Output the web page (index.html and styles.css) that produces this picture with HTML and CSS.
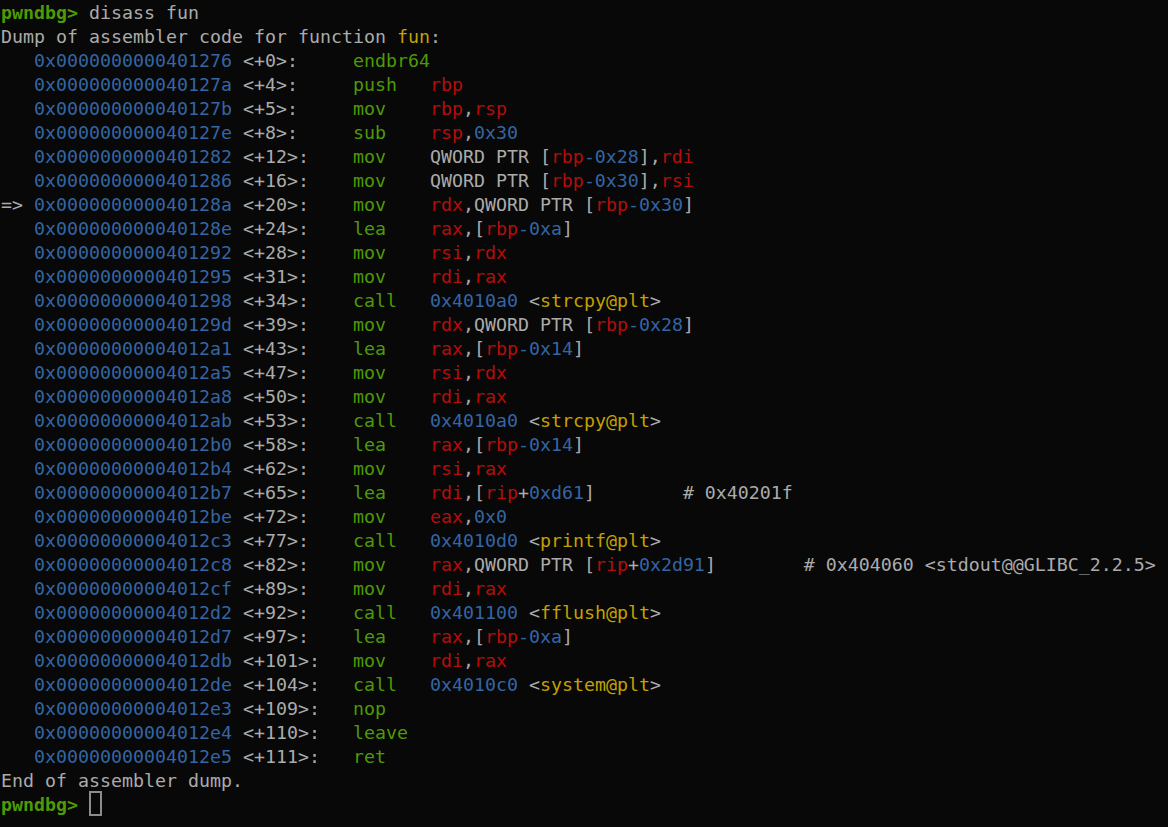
FILE: index.html
```html
<!DOCTYPE html>
<html>
<head>
<meta charset="utf-8">
<link rel="stylesheet" href="styles.css">
</head>
<body>
<pre class="term"><span class="p">pwndbg&gt;</span> disass fun
Dump of assembler code for function <span class="y">fun</span>:
   <span class="a">0x0000000000401276</span> &lt;+0&gt;:     <span class="g">endbr64</span>
   <span class="a">0x000000000040127a</span> &lt;+4&gt;:     <span class="g">push</span>   <span class="r">rbp</span>
   <span class="a">0x000000000040127b</span> &lt;+5&gt;:     <span class="g">mov</span>    <span class="r">rbp</span>,<span class="r">rsp</span>
   <span class="a">0x000000000040127e</span> &lt;+8&gt;:     <span class="g">sub</span>    <span class="r">rsp</span>,<span class="n">0x30</span>
   <span class="a">0x0000000000401282</span> &lt;+12&gt;:    <span class="g">mov</span>    QWORD PTR [<span class="r">rbp</span><span class="n">-0x28</span>],<span class="r">rdi</span>
   <span class="a">0x0000000000401286</span> &lt;+16&gt;:    <span class="g">mov</span>    QWORD PTR [<span class="r">rbp</span><span class="n">-0x30</span>],<span class="r">rsi</span>
=&gt; <span class="a">0x000000000040128a</span> &lt;+20&gt;:    <span class="g">mov</span>    <span class="r">rdx</span>,QWORD PTR [<span class="r">rbp</span><span class="n">-0x30</span>]
   <span class="a">0x000000000040128e</span> &lt;+24&gt;:    <span class="g">lea</span>    <span class="r">rax</span>,[<span class="r">rbp</span><span class="n">-0xa</span>]
   <span class="a">0x0000000000401292</span> &lt;+28&gt;:    <span class="g">mov</span>    <span class="r">rsi</span>,<span class="r">rdx</span>
   <span class="a">0x0000000000401295</span> &lt;+31&gt;:    <span class="g">mov</span>    <span class="r">rdi</span>,<span class="r">rax</span>
   <span class="a">0x0000000000401298</span> &lt;+34&gt;:    <span class="g">call</span>   <span class="n">0x4010a0</span> &lt;<span class="y">strcpy@plt</span>&gt;
   <span class="a">0x000000000040129d</span> &lt;+39&gt;:    <span class="g">mov</span>    <span class="r">rdx</span>,QWORD PTR [<span class="r">rbp</span><span class="n">-0x28</span>]
   <span class="a">0x00000000004012a1</span> &lt;+43&gt;:    <span class="g">lea</span>    <span class="r">rax</span>,[<span class="r">rbp</span><span class="n">-0x14</span>]
   <span class="a">0x00000000004012a5</span> &lt;+47&gt;:    <span class="g">mov</span>    <span class="r">rsi</span>,<span class="r">rdx</span>
   <span class="a">0x00000000004012a8</span> &lt;+50&gt;:    <span class="g">mov</span>    <span class="r">rdi</span>,<span class="r">rax</span>
   <span class="a">0x00000000004012ab</span> &lt;+53&gt;:    <span class="g">call</span>   <span class="n">0x4010a0</span> &lt;<span class="y">strcpy@plt</span>&gt;
   <span class="a">0x00000000004012b0</span> &lt;+58&gt;:    <span class="g">lea</span>    <span class="r">rax</span>,[<span class="r">rbp</span><span class="n">-0x14</span>]
   <span class="a">0x00000000004012b4</span> &lt;+62&gt;:    <span class="g">mov</span>    <span class="r">rsi</span>,<span class="r">rax</span>
   <span class="a">0x00000000004012b7</span> &lt;+65&gt;:    <span class="g">lea</span>    <span class="r">rdi</span>,[<span class="r">rip</span>+<span class="n">0xd61</span>]        # 0x40201f
   <span class="a">0x00000000004012be</span> &lt;+72&gt;:    <span class="g">mov</span>    <span class="r">eax</span>,<span class="n">0x0</span>
   <span class="a">0x00000000004012c3</span> &lt;+77&gt;:    <span class="g">call</span>   <span class="n">0x4010d0</span> &lt;<span class="y">printf@plt</span>&gt;
   <span class="a">0x00000000004012c8</span> &lt;+82&gt;:    <span class="g">mov</span>    <span class="r">rax</span>,QWORD PTR [<span class="r">rip</span>+<span class="n">0x2d91</span>]        # 0x404060 &lt;stdout@@GLIBC_2.2.5&gt;
   <span class="a">0x00000000004012cf</span> &lt;+89&gt;:    <span class="g">mov</span>    <span class="r">rdi</span>,<span class="r">rax</span>
   <span class="a">0x00000000004012d2</span> &lt;+92&gt;:    <span class="g">call</span>   <span class="n">0x401100</span> &lt;<span class="y">fflush@plt</span>&gt;
   <span class="a">0x00000000004012d7</span> &lt;+97&gt;:    <span class="g">lea</span>    <span class="r">rax</span>,[<span class="r">rbp</span><span class="n">-0xa</span>]
   <span class="a">0x00000000004012db</span> &lt;+101&gt;:   <span class="g">mov</span>    <span class="r">rdi</span>,<span class="r">rax</span>
   <span class="a">0x00000000004012de</span> &lt;+104&gt;:   <span class="g">call</span>   <span class="n">0x4010c0</span> &lt;<span class="y">system@plt</span>&gt;
   <span class="a">0x00000000004012e3</span> &lt;+109&gt;:   <span class="g">nop</span>
   <span class="a">0x00000000004012e4</span> &lt;+110&gt;:   <span class="g">leave</span>
   <span class="a">0x00000000004012e5</span> &lt;+111&gt;:   <span class="g">ret</span>
End of assembler dump.
<span class="p">pwndbg&gt;</span> <span class="cursor"> </span></pre>
</body>
</html>
```

FILE: styles.css
```css
html, body {
  margin: 0;
  padding: 0;
  background: #080808;
  height: 100%;
}

.term {
  margin: 0;
  padding: 1px 0 0 1px;
  font-family: "DejaVu Sans Mono", monospace;
  font-size: 18.27px;
  line-height: 24px;
  color: #ababab;
  white-space: pre;
}

.p {
  color: #4e9a06;
  font-weight: bold;
}

.a { color: #3465a4; }
.n { color: #3465a4; }
.g { color: #4e9a06; }
.r { color: #b50d0d; }
.y { color: #c4a000; }

.cursor {
  display: inline-block;
  box-sizing: border-box;
  width: 13px;
  height: 25px;
  margin-top: -2px;
  border: 2px solid #8c8c8c;
  vertical-align: top;
}
```
